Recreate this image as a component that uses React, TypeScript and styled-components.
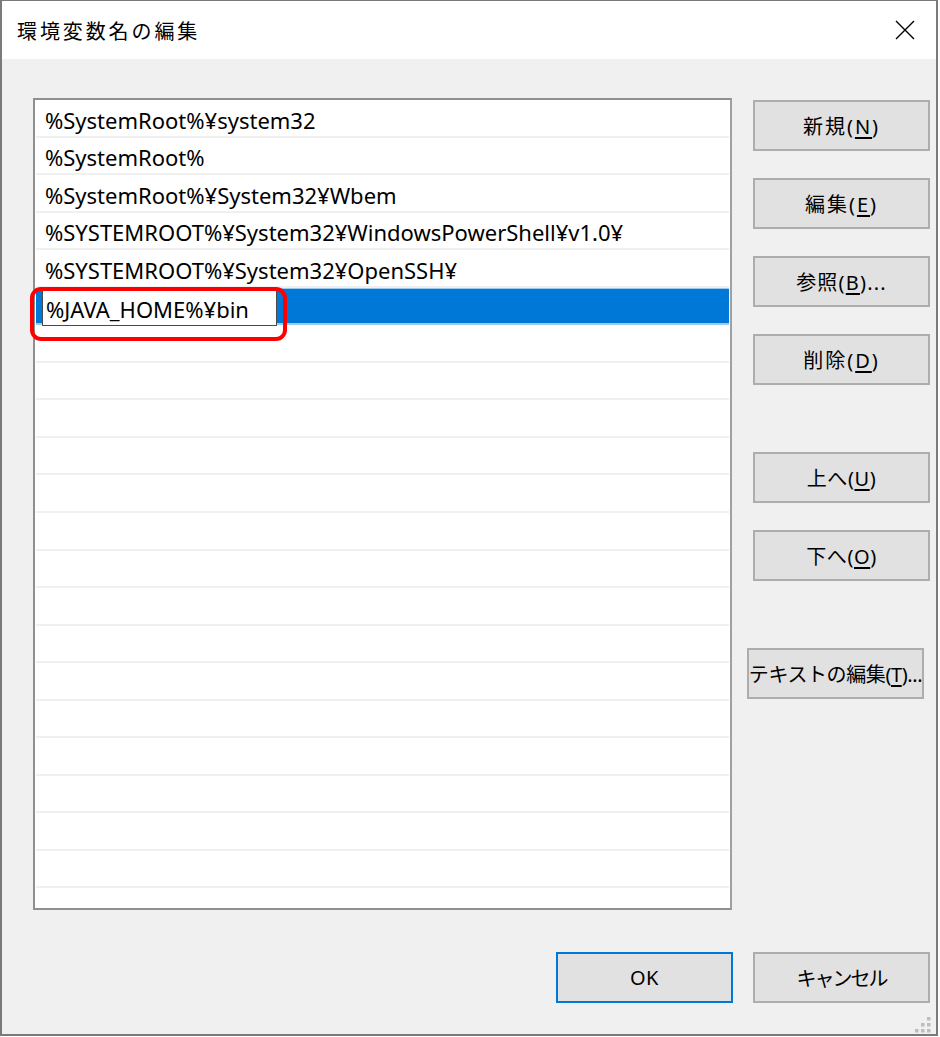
import React from "react";
import styled, { createGlobalStyle } from "styled-components";

const Global = createGlobalStyle`
  html, body { margin: 0; padding: 0; background: #ffffff; }
  body { font-family: "Noto Sans", "Noto Sans CJK JP", sans-serif; }
  * { box-sizing: border-box; }
`;

const Window = styled.div`
  position: relative;
  width: 938px;
  height: 1036px;
  border: 2px solid #7a7a7a;
  border-top-width: 1px;
  display: flex;
  flex-direction: column;
  background: #f0f0f0;
  overflow: hidden;
`;

const TitleBar = styled.div`
  height: 58px;
  flex: none;
  background: #ffffff;
  display: flex;
  align-items: center;
  justify-content: space-between;
  padding: 0 21px 0 15px;
`;

const Title = styled.div`
  font-family: "Noto Sans CJK JP", sans-serif;
  font-size: 20px;
  letter-spacing: 2.9px;
  color: #000;
`;

const CloseIcon = styled.svg`
  width: 20px;
  height: 20px;
  display: block;
`;

const Body = styled.div`
  flex: 1;
  display: grid;
  grid-template-columns: 699px 177px;
  grid-template-rows: 812px auto;
  column-gap: 21px;
  row-gap: 42px;
  padding: 39px 6px 0 31px;
`;

const ListBox = styled.div`
  position: relative;
  border: 2px solid #8f8f8f;
  border-right-color: #a0a0a0;
  background: #ffffff;
  padding: 0 1px;
`;

const ListClip = styled.div`
  height: 100%;
  overflow: hidden;
`;

const Row = styled.div<{ $selected?: boolean }>`
  height: 37.55px;
  display: flex;
  align-items: center;
  padding: 4px 0 0 9px;
  font-size: 22px;
  color: #000;
  white-space: nowrap;
  border-bottom: 2px solid ${(p) => (p.$selected ? "#9ccaf0" : "#f0f0f0")};
  background: ${(p) => (p.$selected ? "#0078d7" : "#ffffff")};
  ${(p) =>
    p.$selected &&
    `
    align-items: flex-start;
    padding: 0 0 0 6px;
    border-top: 1px solid #9ccaf0;
    overflow: visible;
  `}
`;

const Editor = styled.div`
  width: 235px;
  height: 37px;
  flex: none;
  background: #ffffff;
  border: 1px solid #4a4a4a;
  display: flex;
  align-items: center;
  padding: 3px 0 0 3px;
  font-size: 22px;
  color: #000;
  position: relative;
  z-index: 1;
`;

const Annotation = styled.div`
  position: absolute;
  left: -5px;
  top: 187px;
  width: 257px;
  height: 54px;
  border: 4px solid #ff0000;
  border-radius: 11px;
  pointer-events: none;
  z-index: 2;
`;

const ButtonColumn = styled.div`
  display: flex;
  flex-direction: column;
  padding-top: 2px;
`;

const Button = styled.button<{ $gap?: number; $shift?: number; $default?: boolean; $ls?: number }>`
  width: 177px;
  height: 51px;
  flex: none;
  margin-top: ${(p) => p.$gap ?? 0}px;
  margin-left: ${(p) => -(p.$shift ?? 0)}px;
  background: #e1e1e1;
  border: 2px solid ${(p) => (p.$default ? "#0078d7" : "#adadad")};
  font-family: "Noto Sans", "Noto Sans CJK JP", sans-serif;
  font-size: 20px;
  letter-spacing: ${(p) => p.$ls ?? 0.6}px;
  color: #000;
  padding: 0;
  display: flex;
  align-items: center;
  justify-content: center;
  white-space: nowrap;
`;

const Footer = styled.div`
  grid-column: 1 / span 2;
  display: grid;
  grid-template-columns: 699px 177px;
  column-gap: 21px;
  & > :first-child { justify-self: end; margin-right: -1px; }
`;

const Grip = styled.svg`
  position: absolute;
  right: 5px;
  bottom: 1px;
  width: 16px;
  height: 16px;
`;

const U = styled.span`
  text-decoration: underline;
  text-underline-offset: 3px;
`;

const entries = [
  "%SystemRoot%¥system32",
  "%SystemRoot%",
  "%SystemRoot%¥System32¥Wbem",
  "%SYSTEMROOT%¥System32¥WindowsPowerShell¥v1.0¥",
  "%SYSTEMROOT%¥System32¥OpenSSH¥",
];

const Label = ({ text, key1, tail = "" }: { text: string; key1: string; tail?: string }) => (
  <span>
    {text}(<U>{key1}</U>){tail}
  </span>
);

export default function App() {
  const blanks = Array.from({ length: 17 });
  return (
    <>
      <Global />
      <Window>
        <TitleBar>
          <Title>環境変数名の編集</Title>
          <CloseIcon viewBox="0 0 20 20">
            <path d="M1 1 L19 19 M19 1 L1 19" stroke="#000" strokeWidth="1.4" fill="none" />
          </CloseIcon>
        </TitleBar>
        <Body>
          <ListBox>
            <ListClip>
              {entries.map((e) => (
                <Row key={e}>{e}</Row>
              ))}
              <Row $selected>
                <Editor>%JAVA_HOME%¥bin</Editor>
              </Row>
              {blanks.map((_, i) => (
                <Row key={i} />
              ))}
            </ListClip>
            <Annotation />
          </ListBox>
          <ButtonColumn>
            <Button $ls={2}>
              <Label text="新規" key1="N" />
            </Button>
            <Button $gap={27} $ls={2}>
              <Label text="編集" key1="E" />
            </Button>
            <Button $gap={27} $ls={1.2}>
              <Label text="参照" key1="B" tail="..." />
            </Button>
            <Button $gap={27} $ls={2}>
              <Label text="削除" key1="D" />
            </Button>
            <Button $gap={67}>
              <Label text="上へ" key1="U" />
            </Button>
            <Button $gap={27}>
              <Label text="下へ" key1="O" />
            </Button>
            <Button $gap={67} $shift={6} $ls={-0.4}>
              <Label text="テキストの編集" key1="T" tail="..." />
            </Button>
          </ButtonColumn>
          <Footer>
            <Button $default>OK</Button>
            <Button $ls={-2}>キャンセル</Button>
          </Footer>
        </Body>
        <Grip viewBox="0 0 16 16">
          {[
            [12, 0],
            [6, 6],
            [12, 6],
            [0, 12],
            [6, 12],
            [12, 12],
          ].map(([x, y], i) => (
            <rect key={i} x={x} y={y} width="3.5" height="3.5" fill="#bdbdbd" />
          ))}
        </Grip>
      </Window>
    </>
  );
}
